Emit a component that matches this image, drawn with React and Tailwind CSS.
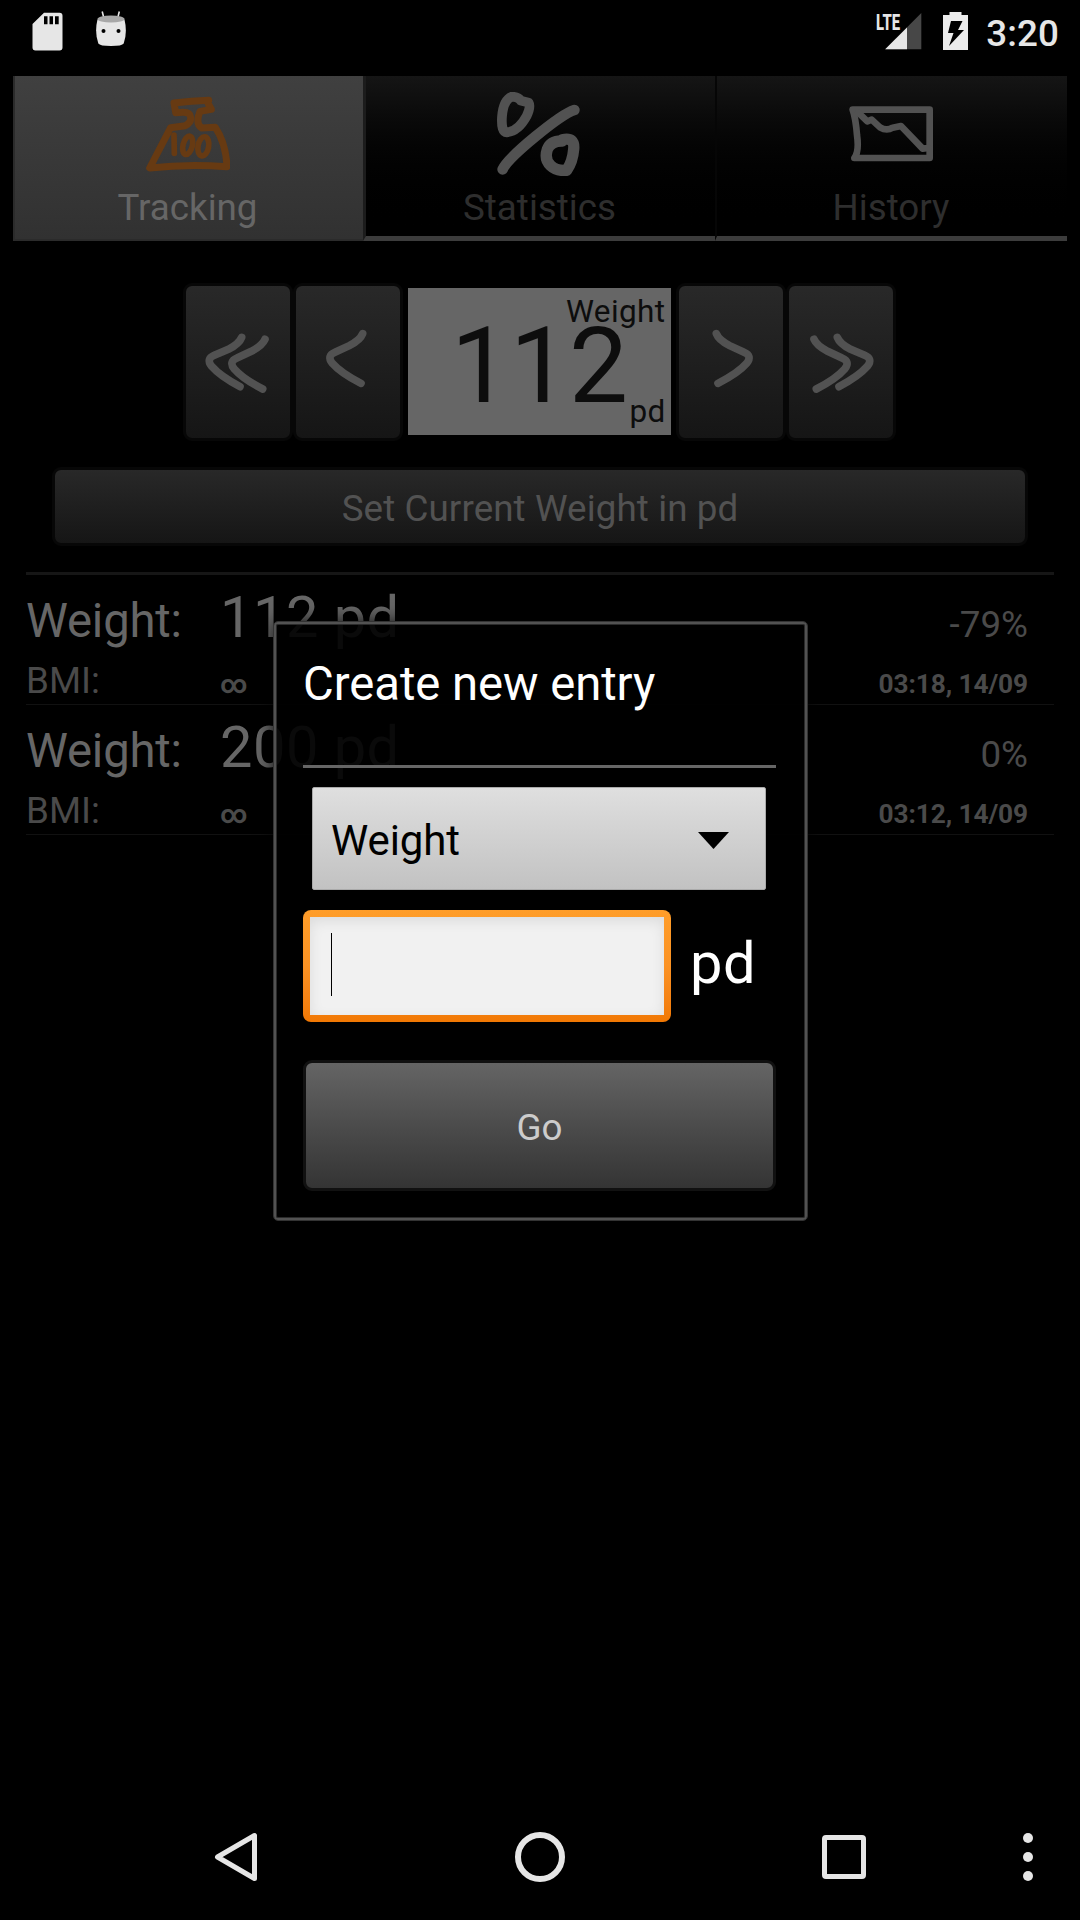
import React from "react";

function SdCard() {
  return (
    <svg className="h-[39px] w-[31px]" viewBox="0 0 31 39" fill="#e6e6e6">
      <path
        fillRule="evenodd"
        d="M12 0.7H27.5a3 3 0 0 1 3 3V35.500a3 3 0 0 1-3 3H3.500a3 3 0 0 1-3-3V12ZM12 4.300v8h3.500v-8ZM17.500 4.300v8h3.500v-8ZM23 4.300v8h3.700v-8Z"
      />
    </svg>
  );
}

function Android() {
  return (
    <svg className="h-[37px] w-[32px]" viewBox="0 0 32 37">
      <path d="M7.200 1.500 9 8.500M24.300 1.500 22.600 8.500" stroke="#e6e6e6" strokeWidth="1.600" />
      <path d="M2.500 9.500Q-.6 22 3.300 33.500Q5 36 16 36T28.700 33.500Q32.600 22 29.500 9.500Z" fill="#e6e6e6" />
      <ellipse cx="16" cy="9" rx="13.500" ry="3.600" fill="#a8a8a8" />
      <circle cx="8.500" cy="21" r="2" />
      <circle cx="23.500" cy="21" r="2" />
    </svg>
  );
}

function Signal() {
  return (
    <div className="relative mr-[21px] h-[37px] w-[46px]">
      <svg className="h-[37px] w-[46px]" viewBox="0 0 46 37">
        <path d="M9.200 36.300 45.300 0V36.300Z" fill="#474747" />
        <path d="M9.200 36.300 31 14.500V36.300Z" fill="#e6e6e6" />
      </svg>
      <span className="absolute left-0 top-[-4px] origin-left scale-x-[0.66] text-[22.500px] font-extrabold leading-[26px] text-[#e6e6e6]">
        LTE
      </span>
    </div>
  );
}

function Battery() {
  return (
    <svg className="h-[38px] w-[25px]" viewBox="0 0 25 38">
      <path d="M6.500 0H18.500V3H25V38H0V3H6.500Z" fill="#ececec" />
      <path d="M8 9H19.500L15 18H21L6 34 10.500 21H5Z" fill="#000" />
    </svg>
  );
}

function WeightIcon() {
  return (
    <svg className="size-[84px]" viewBox="438 276 252 252" fill="none" stroke="#673a12" strokeWidth="21" strokeLinejoin="round" strokeLinecap="round">
      <path d="M626 301Q575 303 522 309L527 338 548 337Q570 336 572 352T556 377L512 383 449 504Q560 491 681 500Q678 430 646 382L605 384Q585 372 600 334L634 328 625 312" />
      <g strokeWidth="17">
        <path d="M522 405 523 460" />
        <ellipse cx="563" cy="436" rx="14" ry="28" transform="rotate(14 563 436)" />
        <ellipse cx="610" cy="439" rx="16" ry="29" transform="rotate(10 610 439)" />
      </g>
    </svg>
  );
}

function PercentIcon() {
  return (
    <svg className="size-[84px]" viewBox="411 66 252 252" fill="none" stroke="#525252" strokeLinejoin="round" strokeLinecap="round">
      <path strokeWidth="29" d="M455 80Q475 80 482 92L506 98Q513 110 500 138Q475 184 440 187Q423 187 426 140Q430 90 455 80Z" />
      <path strokeWidth="32" d="M643 120C600 134 445 260 428 298" />
      <path strokeWidth="34" d="M607 209Q645 200 641 238Q638 275 620 301Q590 304 572 287Q552 268 562 238Q572 212 607 213Z" />
    </svg>
  );
}

function HistoryIcon() {
  return (
    <svg className="size-[84px]" viewBox="387 276 252 252" fill="none" stroke="#525252" strokeWidth="20" strokeLinejoin="round" strokeLinecap="round">
      <path d="M398 329H629V474H403Q418 455 411 405Q407 355 398 329" />
      <path strokeWidth="20" d="M415 338 442 364 455 359 480 382Q500 394 518 383L543 378 608 446 625 444" />
    </svg>
  );
}

const single = "M575 191Q568 210 535 227L492 247Q466 258 484 280Q510 310 570 340";
const outer = "M216 202Q209 221 176 238L134 256Q108 267 126 289Q152 319 211 350";
const inner = "M286 208Q278 227 245 244L202 264Q176 275 194 297Q220 327 279 357";

function Arrow({ double, flip }) {
  return (
    <svg
      className={"h-[84px] w-[84px] " + (flip ? "-scale-x-100" : "")}
      viewBox={double ? "76 150 252 252" : "402 150 252 252"}
      fill="none"
      stroke="#525252"
      strokeWidth="23"
      strokeLinecap="round"
    >
      {double ? (
        <>
          <path d={outer} />
          <path d={inner} />
        </>
      ) : (
        <path d={single} />
      )}
    </svg>
  );
}

function StatusBar() {
  return (
    <header className="flex h-[76px] items-start pl-8 pr-[21px] pt-3">
      <SdCard />
      <div className="-mt-[2px] ml-[31.5px]">
        <Android />
      </div>
      <div className="ml-auto flex items-start">
        <div className="mt-px">
          <Signal />
        </div>
        <Battery />
        <span className="ml-[18px] text-[36.75px] font-medium leading-[44px] tracking-[0.1px] text-[#e6e6e6]">3:20</span>
      </div>
    </header>
  );
}

function Tabs() {
  return (
    <nav className="mx-[13px] grid h-[165px] grid-cols-[350px_352px_352px] text-[36.75px] leading-[44px] text-[#2e2e2e]">
      <div className="flex flex-col items-center border-b-2 border-l-2 border-[#2b2b2b] bg-linear-to-b from-[#404040] to-[#313131] pr-[3px] pt-4 text-[#666]">
        <WeightIcon />
        <span className="mt-[10px]">Tracking</span>
      </div>
      <div className="flex flex-col items-center border-b-[5px] border-l-[3px] border-b-[#3c3c3c] border-l-[#1c1c1c] bg-linear-to-b from-[#151515] to-black pr-[2px] pt-4">
        <div className="-ml-[2px]">
          <PercentIcon />
        </div>
        <span className="mt-[10px]">Statistics</span>
      </div>
      <div className="flex flex-col items-center border-b-[5px] border-l-2 border-b-[#3c3c3c] border-l-[#060606] bg-linear-to-b from-[#151515] to-black pr-[2px] pt-4">
        <HistoryIcon />
        <span className="mt-[10px]">History</span>
      </div>
    </nav>
  );
}

function StepButton({ double, flip }) {
  return (
    <button className="flex h-[158px] w-[110px] items-center justify-center rounded-[9px] border-[3px] border-[#070707] bg-linear-to-b from-[#292929] to-[#151515] bg-origin-border">
      <div className={flip ? "ml-[3px]" : "-ml-px"}>
        <Arrow double={double} flip={flip} />
      </div>
    </button>
  );
}

function Stepper() {
  return (
    <div className="mt-[42px] flex justify-center pr-[2px] text-[#0d0d0d]">
      <StepButton double />
      <StepButton />
      <div className="relative mx-[5px] mt-[5px] h-[147px] w-[263px] bg-[#666] text-center">
        <span className="block pl-px pt-[19px] text-[105px] leading-[120px]">112</span>
        <span className="absolute right-[5px] top-[6px] text-[31.5px] leading-[36px] tracking-[0.4px]">Weight</span>
        <span className="absolute bottom-[5px] right-[5px] text-[31.5px] leading-[36px] tracking-[0.3px]">pd</span>
      </div>
      <StepButton flip />
      <StepButton double flip />
    </div>
  );
}

function Entry({ value, change, date }) {
  return (
    <div className="flex h-[130px] border-b border-[#111] pr-[26px] text-[#4a4a4a]">
      <div className="w-[194px] pt-[16px]">
        <div className="text-[47.25px] leading-[60px] tracking-[-0.2px] text-[#666]">Weight:</div>
        <div className="mt-[8px] text-[36.75px] leading-[44px]">BMI:</div>
      </div>
      <div className="pt-[12px]">
        <div className="text-[57.75px] leading-[60px] tracking-[0.5px] text-[#666]">{value}</div>
        <div className="mt-[17px] text-[26.25px] font-bold leading-[40px]">∞</div>
      </div>
      <div className="ml-auto pt-[28px] text-right">
        <div className="text-[36.75px] leading-[44px]">{change}</div>
        <div className="mt-[19px] text-[26.25px] font-bold leading-[36px] tracking-[-0.1px]">{date}</div>
      </div>
    </div>
  );
}

function Dialog() {
  return (
    <div className="absolute left-[273px] top-[621px] h-[600px] w-[535px] rounded-[5px] border border-[#333] shadow-[0_0_18px_rgba(0,0,0,0.8)]">
      <div className="h-full rounded-[4px] border-2 border-[#525252] bg-black/90 pl-[27px] pr-[29px] shadow-[inset_0_0_0_1px_#2a2a2a]">
        <h1 className="h-[141px] pt-[30px] text-[47.25px] leading-[60px] tracking-[-0.05px] text-white">Create new entry</h1>
        <div className="h-[3px] bg-[#666]" />
        <div className="ml-[9px] mt-[19px] flex h-[103px] w-[454px] items-center justify-between rounded-[2px] border border-[#aaa] bg-linear-to-b from-[#dfdfdf] to-[#c2c2c2] pl-[18px] pr-[36px] text-[42px] text-black">
          <span className="pt-[4px] leading-[50px] tracking-[-0.1px]">Weight</span>
          <svg className="mt-[4px] h-[17px] w-[31px]" viewBox="0 0 31 17">
            <path d="M0 0H31L15.500 17Z" />
          </svg>
        </div>
        <div className="mt-[20px] flex h-[112px]">
          <div className="w-[368px] rounded-[8px] bg-linear-to-b from-[#ff9d29] via-[#fb9223] to-[#f17803] p-[7px]">
            <div className="h-full bg-[#f1f1f1] pl-[21px] pt-[16px] shadow-[inset_0_4px_14px_rgba(0,0,0,0.09)]">
              <div className="h-[63px] w-px bg-black" />
            </div>
          </div>
          <span className="ml-[19px] mt-[18px] text-[57.75px] leading-[70px] tracking-[0.6px] text-white">pd</span>
        </div>
        <button className="mt-[38px] flex h-[131px] w-[473px] items-center justify-center rounded-[9px] border-[3px] border-[#111] bg-linear-to-b from-[#666] to-[#333] bg-origin-border text-[36.75px] leading-[44px] text-[#ccc]">
          <span className="pt-[5px]">Go</span>
        </button>
      </div>
    </div>
  );
}

function NavBar() {
  return (
    <footer className="mt-auto flex h-[126px] items-center pl-[214px] pr-[47px]">
      <svg className="h-[52px] w-[44px]" viewBox="0 0 44 52" fill="none" stroke="#e6e6e6" strokeWidth="5" strokeLinejoin="round">
        <path d="M40.500 4.500V47.500L3.500 26Z" />
      </svg>
      <div className="ml-[257px] size-[50px] rounded-full border-[6px] border-[#e6e6e6]" />
      <div className="ml-[257px] size-[44px] rounded-[4px] border-[5px] border-[#e6e6e6]" />
      <div className="ml-auto flex flex-col gap-[9px]">
        <i className="size-[10px] rounded-full bg-[#e6e6e6]" />
        <i className="size-[10px] rounded-full bg-[#e6e6e6]" />
        <i className="size-[10px] rounded-full bg-[#e6e6e6]" />
      </div>
    </footer>
  );
}

export default function App() {
  return (
    <div className="relative flex h-[1920px] w-[1080px] flex-col overflow-hidden bg-black font-[Roboto,sans-serif]">
      <StatusBar />
      <Tabs />
      <Stepper />
      <button className="mx-[52px] mt-[26px] flex h-[79px] items-center justify-center rounded-[9px] border-[3px] border-[#070707] bg-linear-to-b from-[#292929] to-[#151515] bg-origin-border text-[36.75px] leading-[44px] tracking-[0.1px] text-[#525252]">
        <span className="pt-[5px]">Set Current Weight in pd</span>
      </button>
      <main className="mx-[26px] mt-[26px] border-t-[3px] border-[#161616]">
        <Entry value="112 pd" change="-79%" date="03:18, 14/09" />
        <Entry value="200 pd" change="0%" date="03:12, 14/09" />
      </main>
      <NavBar />
      <Dialog />
    </div>
  );
}
